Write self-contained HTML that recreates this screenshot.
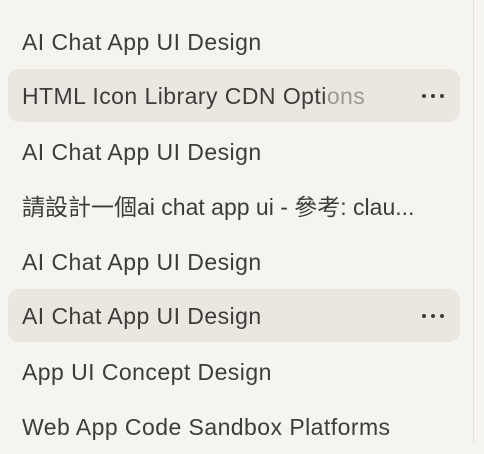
<!DOCTYPE html><html><head><style>
body{margin:0;width:484px;height:444px;background:#f5f4ef;overflow:hidden;position:relative;font-family:"Liberation Sans","Noto Sans CJK TC",sans-serif;}
.line{position:absolute;left:473px;top:0;width:1px;height:444px;background:#e4e2da}
.row{position:absolute;left:8px;width:452px;height:53px;border-radius:11px;}
.row.h{background:#e9e7df}
.t{position:absolute;left:14px;top:1px;line-height:53px;font-size:23px;letter-spacing:0.45px;color:#3d3c38;white-space:nowrap}
.d{position:absolute;left:414px;top:25px;}
.d i{position:absolute;width:4px;height:4px;border-radius:50%;background:#3d3c38;top:0}
.fade{color:#9a9994}
</style></head><body>
<div class="line"></div>
<div class="row" style="top:15px"><span class="t">AI Chat App UI Design</span></div>
<div class="row h" style="top:69px"><span class="t">HTML Icon Library CDN Opti<span class="fade">ons</span></span><div class="d"><i style="left:0"></i><i style="left:9px"></i><i style="left:18px"></i></div></div>
<div class="row" style="top:125px"><span class="t">AI Chat App UI Design</span></div>
<div class="row" style="top:180px"><span class="t" style="letter-spacing:0">請設計一個ai chat app ui - 參考: clau...</span></div>
<div class="row" style="top:235px"><span class="t">AI Chat App UI Design</span></div>
<div class="row h" style="top:289px"><span class="t">AI Chat App UI Design</span><div class="d"><i style="left:0"></i><i style="left:9px"></i><i style="left:18px"></i></div></div>
<div class="row" style="top:345px"><span class="t">App UI Concept Design</span></div>
<div class="row" style="top:400px"><span class="t">Web App Code Sandbox Platforms</span></div>
</body></html>
